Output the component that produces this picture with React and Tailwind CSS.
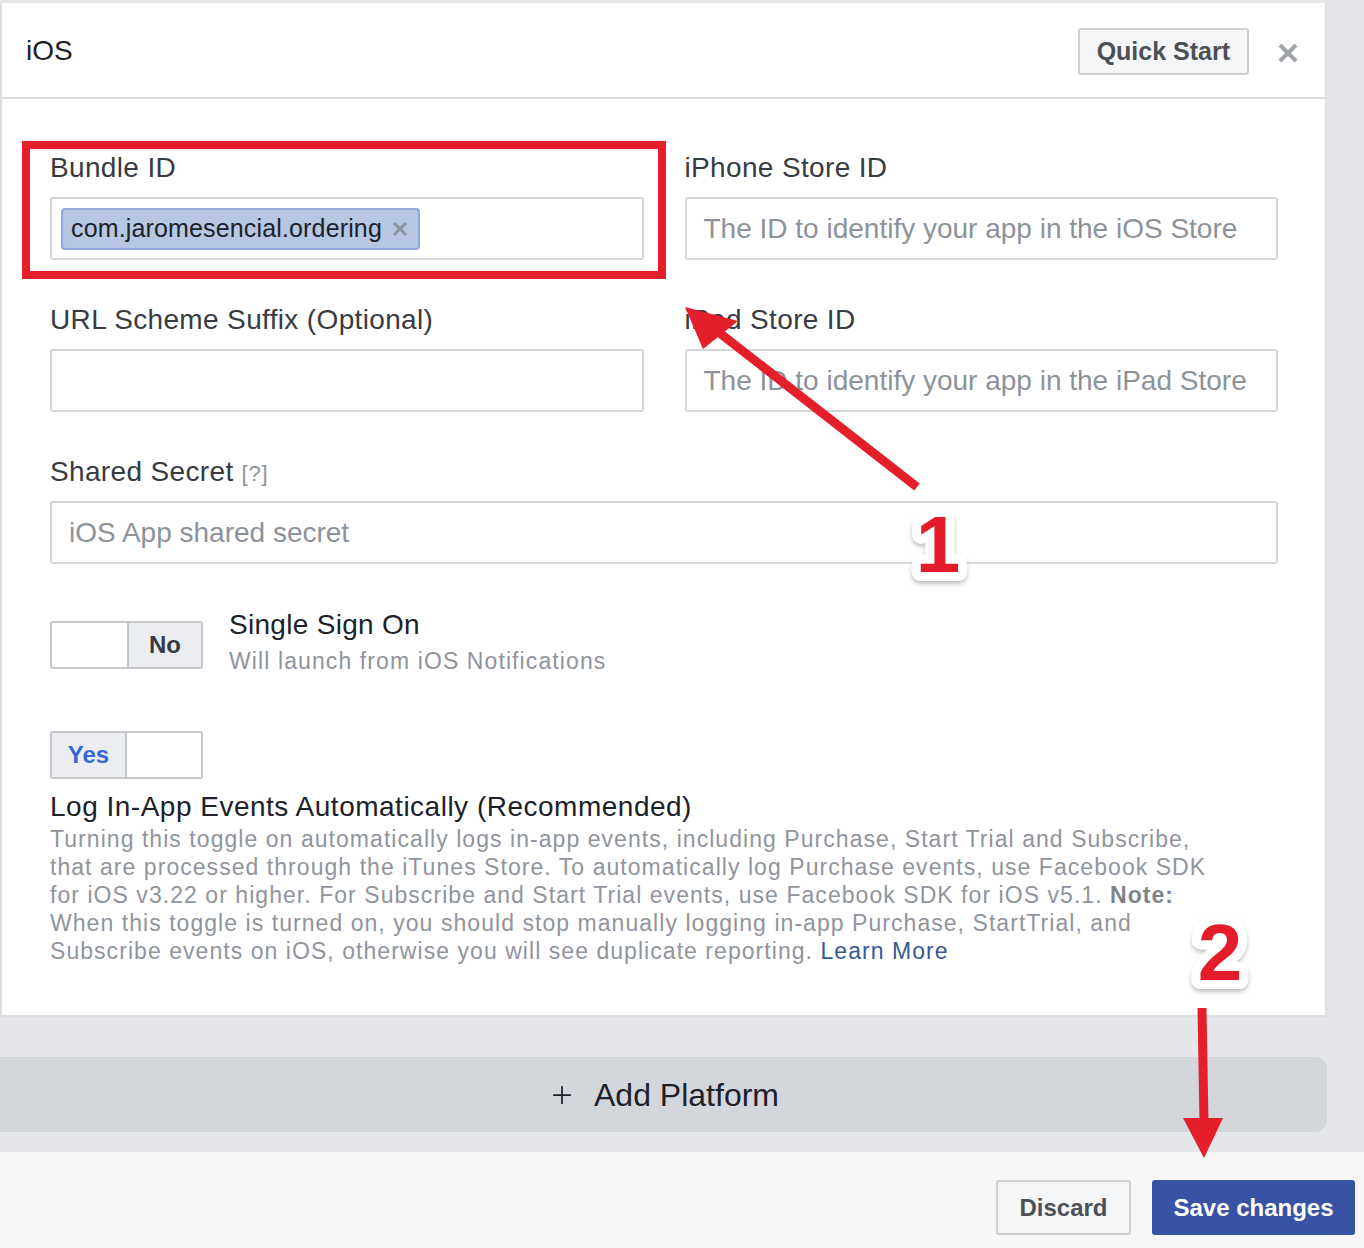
import React from 'react';
import { Plus } from 'lucide-react';

const font = "font-['Liberation_Sans',Arial,sans-serif]";

function Field({ label, hint, placeholder, children }) {
  return (
    <div>
      <div className="h-[32px] text-[28px] leading-[32px] text-[#373b42] tracking-[0.35px] mb-[13px] whitespace-nowrap">
        {label}
        {hint && <span className="text-[22px] leading-none text-[#90949c] ml-[8px] tracking-[0.8px]">{hint}</span>}
      </div>
      <div className="h-[63px] border-2 border-[#d3d6db] rounded-[3px] bg-white flex items-center px-[17px]">
        {children || <span className="text-[28px] text-[#8d929a]">{placeholder}</span>}
      </div>
    </div>
  );
}

function Toggle({ on }) {
  return (
    <div className="w-[153px] h-[48px] border-2 border-[#c4c7cc] rounded-[3px] flex overflow-hidden shrink-0">
      {on ? (
        <>
          <div className="w-[75px] bg-[#ebedf0] border-r-2 border-[#c4c7cc] flex items-center justify-center text-[24px] font-bold text-[#3468d9]">Yes</div>
          <div className="flex-1 bg-white" />
        </>
      ) : (
        <>
          <div className="w-[77px] bg-white border-r-2 border-[#c4c7cc]" />
          <div className="flex-1 bg-[#ebedf0] flex items-center justify-center text-[24px] font-bold text-[#373b42]">No</div>
        </>
      )}
    </div>
  );
}

export default function App() {
  return (
    <div className={`${font} relative h-[1248px] overflow-hidden bg-[#e4e6ea]`}>
      {/* iOS platform panel */}
      <div className="pt-[3px] pr-[37px]">
        <div className="bg-white border-l-2 border-r-2 border-[#dcdee2] border-b-2">
          <div className="h-[96px] flex items-center justify-between pl-[24px] pr-[26px] pt-[3px] border-b-2 border-[#dadde1]">
            <div className="text-[28px] text-[#1d2129] -mt-[2px]">iOS</div>
            <div className="flex items-center gap-[28px]">
              <button className="h-[47px] px-[17px] bg-[#f5f6f7] border-2 border-[#ccd0d5] rounded-[3px] text-[25px] font-bold text-[#4b4f56]">Quick Start</button>
              <svg width="22" height="22" viewBox="0 0 22 22" className="mt-[2px]">
                <path d="M3 3 L19 19 M19 3 L3 19" stroke="#9ea2a8" strokeWidth="4" strokeLinecap="butt" />
              </svg>
            </div>
          </div>

          <div className="pl-[48px] pr-[47px] pt-[53px] pb-[50px]">
            <div className="grid grid-cols-2 gap-x-[41px] gap-y-[44px]">
              <Field label="Bundle ID">
                <div className="-ml-[8px] h-[42px] flex items-center gap-[10px] bg-[#b6c6e3] border-2 border-[#8fa8d6] rounded-[4px] pl-[8px] pr-[10px]">
                  <span className="text-[25px] text-[#1d2129] tracking-[0.15px]">com.jaromesencial.ordering</span>
                  <svg width="16" height="16" viewBox="0 0 16 16">
                    <path d="M2 2 L14 14 M14 2 L2 14" stroke="#8d949e" strokeWidth="3" />
                  </svg>
                </div>
              </Field>
              <Field label="iPhone Store ID" placeholder="The ID to identify your app in the iOS Store" />
              <Field label="URL Scheme Suffix (Optional)"> </Field>
              <Field label="iPad Store ID" placeholder="The ID to identify your app in the iPad Store" />
              <div className="col-span-2">
                <Field label="Shared Secret" hint="[?]" placeholder="iOS App shared secret" />
              </div>
            </div>

            <div className="mt-[57px] h-[48px] flex items-start gap-[26px]">
              <Toggle on={false} />
              <div className="-mt-[12px]">
                <div className="text-[28px] leading-[32px] text-[#1d2129] tracking-[0.3px]">Single Sign On</div>
                <div className="text-[23px] leading-[40px] text-[#90949c] tracking-[1.1px]">Will launch from iOS Notifications</div>
              </div>
            </div>

            <div className="mt-[62px]">
              <Toggle on={true} />
              <div className="mt-[12px] text-[28px] leading-[32px] text-[#1d2129] tracking-[0.5px]">Log In-App Events Automatically (Recommended)</div>
              <p className="mt-[2px] text-[23px] leading-[28px] text-[#90949c] tracking-[1.05px]">
                Turning this toggle on automatically logs in-app events, including Purchase, Start Trial and Subscribe,<br />
                that are processed through the iTunes Store. To automatically log Purchase events, use Facebook SDK<br />
                for iOS v3.22 or higher. For Subscribe and Start Trial events, use Facebook SDK for iOS v5.1. <b className="text-[#7f838a]">Note:</b><br />
                When this toggle is turned on, you should stop manually logging in-app Purchase, StartTrial, and<br />
                Subscribe events on iOS, otherwise you will see duplicate reporting. <a className="text-[#365899]">Learn More</a>
              </p>
            </div>
          </div>
        </div>
      </div>

      {/* Add platform bar */}
      <div className="mt-[40px] pr-[37px]">
        <div className="h-[75px] bg-[#d3d6db] rounded-r-[12px] flex items-center justify-center gap-[18px] text-[32px] text-[#1d2129]">
          <Plus className="w-[28px] h-[28px]" strokeWidth={1.5} />
          <span>Add Platform</span>
        </div>
      </div>

      {/* Footer actions */}
      <div className="absolute left-0 right-0 top-[1152px] bottom-0 bg-[#f7f7f7] flex justify-end items-start pt-[28px] pr-[9px] gap-[21px]">
        <button className="h-[55px] w-[135px] bg-[#f5f6f7] border-2 border-[#ccd0d5] rounded-[3px] text-[24px] font-bold text-[#4b4f56]">Discard</button>
        <button className="h-[55px] w-[203px] bg-[#3853a4] rounded-[3px] text-[24px] font-bold text-white">Save changes</button>
      </div>

      {/* Red callouts */}
      <div className="absolute left-[22px] top-[141px] w-[644px] h-[138px] border-[8px] border-[#e41e2b] pointer-events-none" />
      <svg className="absolute inset-0 pointer-events-none" width="1364" height="1248">
        <defs>
          <filter id="badge" x="-50%" y="-50%" width="200%" height="200%">
            <feDropShadow dx="0" dy="3" stdDeviation="2" floodColor="#000" floodOpacity="0.25" />
          </filter>
        </defs>
        <line x1="917" y1="487" x2="712" y2="327" stroke="#e41e2b" strokeWidth="9" />
        <polygon points="685,307 703,349 738,321" fill="#e41e2b" />
        <line x1="1202" y1="1008" x2="1204" y2="1122" stroke="#e41e2b" strokeWidth="9" />
        <polygon points="1183,1118 1223,1118 1204,1158" fill="#e41e2b" />
        <g filter="url(#badge)">
          <text x="938" y="572" textAnchor="middle" fontFamily="Liberation Sans, Arial, sans-serif" fontWeight="bold" fontSize="80" fill="#e41e2b" stroke="#fff" strokeWidth="18" strokeLinejoin="round" paintOrder="stroke">1</text>
          <text x="1220" y="980" textAnchor="middle" fontFamily="Liberation Sans, Arial, sans-serif" fontWeight="bold" fontSize="80" fill="#e41e2b" stroke="#fff" strokeWidth="18" strokeLinejoin="round" paintOrder="stroke">2</text>
        </g>
      </svg>
    </div>
  );
}
